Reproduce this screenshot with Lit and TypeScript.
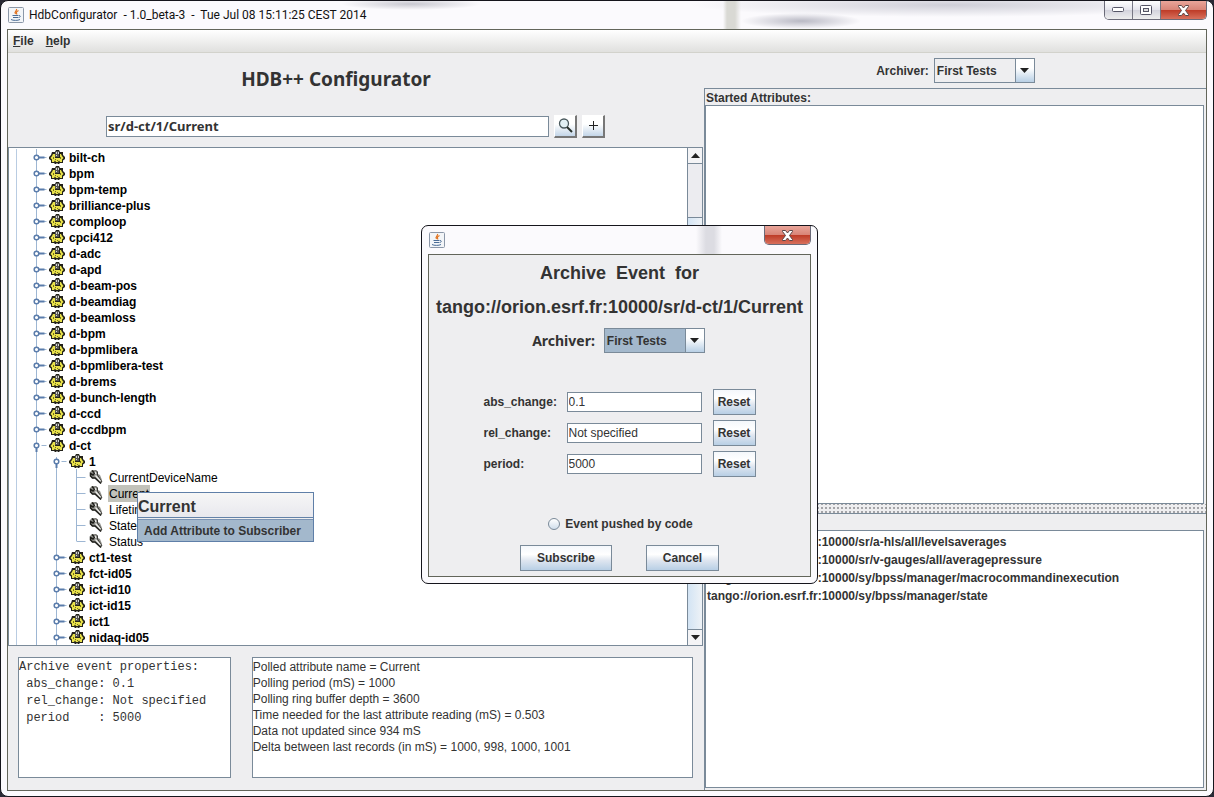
import { LitElement, html, svg, css } from "lit";
import { customElement } from "lit/decorators.js";
import { classMap } from "lit/directives/class-map.js";

type Kind = "closed" | "open" | "leaf";
interface Row { label: string; level: number; kind: Kind; selected?: boolean; first?: boolean; last?: boolean }

const families = [
  "bilt-ch", "bpm", "bpm-temp", "brilliance-plus", "comploop", "cpci412", "d-adc", "d-apd",
  "d-beam-pos", "d-beamdiag", "d-beamloss", "d-bpm", "d-bpmlibera", "d-bpmlibera-test",
  "d-brems", "d-bunch-length", "d-ccd", "d-ccdbpm",
];
const rows: Row[] = [
  ...families.map((label): Row => ({ label, level: 1, kind: "closed" })),
  { label: "d-ct", level: 1, kind: "open" },
  { label: "1", level: 2, kind: "open", first: true },
  { label: "CurrentDeviceName", level: 3, kind: "leaf" },
  { label: "Current", level: 3, kind: "leaf", selected: true },
  { label: "Lifetime", level: 3, kind: "leaf" },
  { label: "State", level: 3, kind: "leaf" },
  { label: "Status", level: 3, kind: "leaf", last: true },
  ...["ct1-test", "fct-id05", "ict-id10", "ict-id15", "ict1", "nidaq-id05"]
    .map((label): Row => ({ label, level: 2, kind: "closed" })),
];

const stopped = [
  "tango://orion.esrf.fr:10000/sr/a-hls/all/levelsaverages",
  "tango://orion.esrf.fr:10000/sr/v-gauges/all/averagepressure",
  "tango://orion.esrf.fr:10000/sy/bpss/manager/macrocommandinexecution",
  "tango://orion.esrf.fr:10000/sy/bpss/manager/state",
];

const archiveProps = `Archive event properties:
 abs_change: 0.1
 rel_change: Not specified
 period    : 5000`;

const polling = `Polled attribute name = Current
Polling period (mS) = 1000
Polling ring buffer depth = 3600
Time needed for the last attribute reading (mS) = 0.503
Data not updated since 934 mS
Delta between last records (in mS) = 1000, 998, 1000, 1001`;

const gear = html`<svg class="ico" width="16" height="16" viewBox="0 0 16 16" aria-hidden="true">
  <path d="M3 3h3l1-2h3l1 2h3v3l2 2v2l-2 1.500V14h-3l-1 1H9l-1-1-1 1H6l-1-1H2v-2.500L0 10V8l2-2z" fill="#23221a"/>
  <path d="M4 5h2v4h5V5h1l1 2 1.500 2L13 10.500V13h-2l-1-1.500L9 13H7l-1-1.500L5 13H3v-2.500L1.500 9 3 7z" fill="#e9e24a"/>
  <path d="M4 8h1v2H4zM8 11h1v1H8zM11 8h1v2h-1zM6 10h1v1H6z" fill="#77701c"/>
  <path d="M6 2h4v6H6z" fill="#55554f"/><path d="M7 3h1v2H7zM7 6h1v1H7zM9 3h1v2H9z" fill="#d6d6d6"/>
</svg>`;

const wrench = html`<svg class="ico" width="14" height="14" viewBox="0 0 14 14" aria-hidden="true">
  <path d="M1 2l2-2h4l2 2v2l2 1 2 5v3h-2L6 8.500H3L1 6z" fill="#8f8f8a"/>
  <path d="M3 .5L5.500 3 4 5 1.500 3.500V6L3.500 8H6l6 5.500" fill="none" stroke="#1e1e1a" stroke-width="1.500"/>
  <path d="M7 .5L8.500 2v3l4.500 7" fill="none" stroke="#3c3c38"/>
  <path d="M6.500 5.500l5 5.500M6 2l1 2" stroke="#efefec" stroke-width="1.200" fill="none"/>
</svg>`;

const java = html`<svg width="16" height="16" viewBox="0 0 16 16" aria-hidden="true">
  <rect x=".5" y=".5" width="15" height="15" rx="1" fill="#f3f5f8" stroke="#8b97a8"/>
  <path d="M8.500 2c1 2-3 2.500-1 5M10.500 3.500C8 5 8 5.500 9 7.500" fill="none" stroke="#e0701c" stroke-width="1.200"/>
  <path d="M4.500 8.500h6M5 10.500h5M3 12.500c2 1.200 7 1.200 9 0" fill="none" stroke="#4a6c96"/>
  <path d="M11 8.500c2 0 1.500 2-.5 2" fill="none" stroke="#4a6c96"/>
</svg>`;

const arrow = (up = false) => html`<svg width="9" height="5" viewBox="0 0 9 5" aria-hidden="true">
  ${up ? svg`<path d="M0 5h9L4.500 0z" fill="#222"/>` : svg`<path d="M0 0h9L4.500 5z" fill="#222"/>`}</svg>`;

const cross = html`<svg width="13" height="11" viewBox="0 0 13 11" aria-hidden="true">
  <path d="M1.500 .5h3l2 2.500 2-2.500h3v1L8.500 5.500l3 4v1h-3l-2-2.500-2 2.500h-3v-1l3-4-3-4z" fill="#fff" stroke="#5a4646"/></svg>`;

@customElement("app-root")
export class AppRoot extends LitElement {
  static styles = css`
    :host { display: block; height: 100vh; min-height: 797px; color: #333;
      font: bold 12px/16px "Liberation Sans", Arial, sans-serif; background: #2a2a36; }
    * { box-sizing: border-box; }
    ul { margin: 0; padding: 0; list-style: none; }
    h1, h2, p { margin: 0; }
    button, input, select, textarea { font: inherit; color: inherit; margin: 0; padding: 0; border-radius: 0; outline: 0; }
    svg { display: block; flex: none; }

    .window { position: relative; height: 100%; display: flex; flex-direction: column;
      border: 1px solid #15151c; border-radius: 8px; padding: 0 6px 5px; overflow: hidden;
      background:
        radial-gradient(ellipse 60px 8px at 800px 20px, #b9b9c4, transparent) no-repeat,
        linear-gradient(90deg, transparent 722px, #d9d9d4 726px, #d9d9d4 734px, transparent 740px) no-repeat 0 0 / 100% 28px,
        radial-gradient(ellipse 260px 12px at 950px 4px, #cfcfd8, transparent) no-repeat,
        radial-gradient(ellipse 70px 6px at 410px 3px, #c8c8d0, transparent) no-repeat,
        #fbfafd; }
    .titlebar { flex: none; height: 28px; display: flex; align-items: center; gap: 5px; padding-left: 1px;
      color: #111; font: 12px/16px Roboto, "Noto Sans", sans-serif; white-space: pre; }
    .caption { align-self: flex-start; margin-left: auto; display: flex; height: 19px;
      border: 1px solid #6a6a78; border-top: 0; border-radius: 0 0 5px 5px; overflow: hidden; }
    .caption button { width: 28px; border: 0; border-right: 1px solid #777784; display: grid; place-items: center;
      background: linear-gradient(#fff, #e4e4ec 50%, #d2d2dc 50%, #eee); }
    .caption .close { width: 45px; border-right: 0; background: linear-gradient(#e9a59a, #d98578 48%, #bd3a26 50%, #d8705c); }
    .client { flex: 1; min-height: 0; display: flex; flex-direction: column; border: 1px solid #62655a; background: #eeeef0; }

    .menubar { flex: none; height: 23px; display: flex; gap: 12px; align-items: center; padding-left: 5px;
      background: linear-gradient(#fff, #e0e0de); border-bottom: 1px solid #d2d2cc; }
    .menubar button { border: 0; background: none; }
    .body { flex: 1; min-height: 0; display: flex; }
    .left { flex: 696; min-width: 0; display: flex; flex-direction: column; }
    .right { flex: 502; min-width: 0; display: flex; flex-direction: column; }

    .title { margin: 13px 0 0; padding-right: 40px; text-align: center; font: bold 19px/26px "Noto Sans", "Open Sans", sans-serif; }
    .search { display: flex; align-items: center; gap: 5px; margin: 22px 99px 0 98px; height: 24px; }
    .search input { flex: 1; min-width: 0; height: 21px; border: 1px solid #7a8a99; background: #fff; padding: 0 1px;
      font: bold 13px/16px "Noto Sans", sans-serif; }
    .tool { width: 23px; height: 23px; display: grid; place-items: center; border: 1px solid #fff;
      border-right: 2px solid #777; border-bottom: 2px solid #777; background: linear-gradient(#fff, #fff 40%, #c3d5e8); }

    .treebox { flex: 1; min-height: 0; margin: 9px 1px 0 0; display: flex; border: 1px solid #7a8a99; background: #fff; }
    .tree { flex: 1; min-width: 0; overflow: hidden; padding-top: 1px; color: #000; }
    .row { height: 16px; display: flex; align-items: center; padding-left: 6px; white-space: nowrap; }
    .node { margin-left: 3px; padding: 0 1px; line-height: 16px; padding-top: 1px; }
    .leaf .node { font-weight: normal; margin-left: 5px; }
    .selected .node { background: #c2c2ba; }
    .scroll { flex: none; width: 15px; display: flex; flex-direction: column; border-left: 1px solid #7a8a99; background: #ececf0; }
    .scroll button { flex: none; height: 16px; border: 1px solid #7a8a99; border-width: 0 0 1px; background: #f4f4f6; display: grid; place-items: center; }
    .scroll .thumb { flex: 1; margin-top: 53px; border-top: 1px solid #7a8a99; background: linear-gradient(90deg, #d3e4f4, #eef2f6); }
    .scroll .down { border-width: 1px 0 0; }

    .infos { flex: none; display: flex; gap: 21px; padding: 11px 11px 11px 10px; height: 144px; }
    textarea { display: block; resize: none; border: 1px solid #7a8a99; background: #fff; overflow: hidden; white-space: pre; }
    .props { flex: 212; min-width: 0; height: 121px; font: 12px/17px "Liberation Mono", "Courier New", monospace; padding-top: 1px; }
    .poll { flex: 442; min-width: 0; height: 121px; font-weight: normal; padding-top: 1px; }

    .choice { display: flex; align-items: center; gap: 5px; }
    .archiver { justify-content: center; height: 35px; padding-left: 1px; }
    .combo { position: relative; display: block; width: 101px; height: 25px; }
    .combo select { appearance: none; width: 100%; height: 100%; border: 1px solid #7a8a99; background: #eeeef0; padding: 0 22px 0 2px; }
    .combo .drop { position: absolute; right: 0; top: 0; width: 20px; height: 25px; display: grid; place-items: center;
      border: 1px solid #7a8a99; background: linear-gradient(#fff, #fff 40%, #b8cfe5); pointer-events: none; }
    .split { flex: 1; min-height: 0; display: flex; flex-direction: column; border: solid #7a8a99; border-width: 1px 0 0 1px; padding-bottom: 2px; }
    .caplabel { flex: none; height: 16px; line-height: 18px; padding-left: 1px; }
    .list { border: 1px solid #7a8a99; background: #fff; margin-right: 2px; padding: 2px 1px; overflow: hidden; }
    .started { flex: 399; }
    .paused { flex: 256; }
    .list li { height: 18px; line-height: 18px; }
    .divider { flex: none; height: 10px; border-bottom: 1px solid #7a8a99;
      background: radial-gradient(circle at 1px 1px, #a4a4a8 0 1px, transparent 1px) 0 3px / 4px 4px #eeeef0; }

    .popup { position: absolute; left: 136px; top: 491px; width: 177px; border: 1px solid #5f7fa8; background: #eeeef0; }
    .popup .head { height: 25px; font-size: 16px; line-height: 27px; border-bottom: 1px solid #6382a8; background: linear-gradient(#f6f6f6, #e8e8ee); }
    .popup button { display: block; width: 100%; height: 22px; margin-top: 1px; border: 0; border-top: 1px solid #7a93b4; text-align: left; padding-left: 6px; background: #a3b8cc; }

    .dialog { position: absolute; left: 420px; top: 224px; width: 397px; height: 359px; display: flex; flex-direction: column;
      border: 1px solid #15151c; border-radius: 7px; padding: 0 6px 6px; overflow: hidden;
      background: linear-gradient(90deg, transparent 274px, #dcdce2 284px, #dcdce2 292px, transparent 300px) no-repeat 0 0 / 100% 28px, #fbfafd; }
    .pane { flex: 1; display: flex; flex-direction: column; align-items: center; border: 1px solid #62655a; background: #eeeef0; }
    .pane h2, .pane .target { font-size: 18px; line-height: 34px; white-space: pre; }
    .pane h2 { margin-top: 1px; }
    .pane .choice { gap: 9px; margin-top: 4px; padding-right: 2px; }
    .pane .big { font: bold 14px/18px "Noto Sans", sans-serif; }
    .pane .combo select { background: #a3b8cc; }
    .fields { display: grid; grid-template-columns: 83px 135px 54px; row-gap: 5px; align-items: center; margin-top: 36px; }
    .fields input { height: 20px; border: 1px solid #7a8a99; background: #fff; padding: 0 1px; font-weight: normal; }
    .fields .btn { margin-left: 11px; }
    .btn { height: 26px; border: 1px solid #7a8a99; background: linear-gradient(#f4f7fb, #fff 35%, #dfe6f0 60%, #b8cfe5); }
    .event { display: flex; align-items: center; gap: 5px; margin-top: 39px; padding-left: 2px; }
    .event input { appearance: none; width: 12px; height: 12px; border: 1px solid #7a8a99; border-radius: 50%; background: linear-gradient(#fff, #d0deec); }
    .actions { display: flex; gap: 34px; margin-top: 13px; }
    .actions .ok { width: 92px; }
    .actions .no { width: 73px; }
  `;

  private guides(r: Row) {
    const lines = [svg`<path d="M1.500 0v16" stroke="#b9cce2"/>`];
    for (let l = 1; l < r.level; l++) lines.push(svg`<path d=${`M${l * 20 + 1.5} 0v16`} stroke="#9db6d3"/>`);
    const x = r.level * 20 + 1.5;
    if (r.kind === "leaf") {
      lines.push(svg`<path d=${`M${x} 0v${r.last ? 8 : 16}M${x} 8.500h9`} stroke="#9db6d3" fill="none"/>`);
    } else {
      lines.push(svg`<path d=${`M${x} ${r.first ? 4 : 0}V16M${x + 5} 8.500h5`} stroke="#9db6d3" fill="none"/>
        <path d=${r.kind === "open" ? `M${x} 10v5` : `M${x + 2} 8.500h6`} stroke="#5a7cab" stroke-width="2" fill="none"/>
        <circle cx=${x} cy="8.500" r="2.300" fill="#fff" stroke="#5a7cab" stroke-width="1.500"/>`);
    }
    const width = r.level * 20 + 14;
    return html`<svg width=${width} height="16" viewBox=${`0 0 ${width} 16`} aria-hidden="true">${lines}</svg>`;
  }

  private combo(id: string) {
    return html`<span class="combo"><select id=${id}><option>First Tests</option></select><span class="drop">${arrow()}</span></span>`;
  }

  private field(name: string, value: string) {
    return html`<label for=${name}>${name}:</label><input id=${name} type="text" .value=${value} />
      <button class="btn" type="button">Reset</button>`;
  }

  render() {
    return html`<div class="window">
      <header class="titlebar">${java}<span>HdbConfigurator  - 1.0_beta-3  -  Tue Jul 08 15:11:25 CEST 2014</span>
        <div class="caption">
          <button type="button" aria-label="Minimize"><svg width="13" height="6"><rect x=".5" y=".5" width="11" height="4" rx="1" fill="#fff" stroke="#555566"/></svg></button>
          <button type="button" aria-label="Maximize"><svg width="13" height="11"><rect x=".5" y=".5" width="11" height="9" rx="1" fill="#fff" stroke="#555566"/><rect x="3.500" y="3.500" width="5" height="3" fill="#ddd" stroke="#555566"/></svg></button>
          <button class="close" type="button" aria-label="Close">${cross}</button>
        </div>
      </header>
      <main class="client">
        <nav class="menubar"><button type="button"><u>F</u>ile</button><button type="button"><u>h</u>elp</button></nav>
        <div class="body">
          <section class="left">
            <h1 class="title">HDB++ Configurator</h1>
            <div class="search">
              <input type="text" aria-label="Attribute" .value=${"sr/d-ct/1/Current"} />
              <button class="tool" type="button" aria-label="Search"><svg width="15" height="15" viewBox="0 0 15 15">
                <circle cx="6" cy="5.500" r="4.500" fill="#e2f0f4" stroke="#4b5a5e" stroke-width="1.300"/><path d="M9 9l5 5" stroke="#26302a" stroke-width="2"/></svg></button>
              <button class="tool" type="button" aria-label="Add"><svg width="9" height="9"><path d="M4.500 0v9M0 4.500h9" stroke="#222"/></svg></button>
            </div>
            <div class="treebox">
              <ul class="tree" role="tree">
                ${rows.map((r) => html`<li role="treeitem" class=${classMap({ row: true, leaf: r.kind === "leaf", selected: !!r.selected })}>
                  ${this.guides(r)}${r.kind === "leaf" ? wrench : gear}<span class="node">${r.label}</span></li>`)}
              </ul>
              <div class="scroll">
                <button type="button" aria-label="Scroll up">${arrow(true)}</button>
                <div class="thumb"></div>
                <button class="down" type="button" aria-label="Scroll down">${arrow()}</button>
              </div>
            </div>
            <div class="infos">
              <textarea class="props" readonly aria-label="Archive event properties" .value=${archiveProps}></textarea>
              <textarea class="poll" readonly aria-label="Polling" .value=${polling}></textarea>
            </div>
          </section>
          <section class="right">
            <div class="choice archiver"><label for="main-archiver">Archiver:</label>${this.combo("main-archiver")}</div>
            <div class="split">
              <div class="caplabel">Started Attributes:</div>
              <ul class="list started"></ul>
              <div class="divider"></div>
              <div class="caplabel"></div>
              <ul class="list paused">${stopped.map((s) => html`<li>${s}</li>`)}</ul>
            </div>
          </section>
        </div>
      </main>
      <div class="popup" role="menu">
        <div class="head">Current</div>
        <button type="button" role="menuitem">Add Attribute to Subscriber</button>
      </div>
      <form class="dialog" role="dialog" aria-label="Archive Event">
        <header class="titlebar">${java}
          <div class="caption"><button class="close" type="button" aria-label="Close">${cross}</button></div>
        </header>
        <div class="pane">
          <h2>Archive  Event  for</h2>
          <p class="target">tango://orion.esrf.fr:10000/sr/d-ct/1/Current</p>
          <div class="choice"><label class="big" for="sub-archiver">Archiver:</label>${this.combo("sub-archiver")}</div>
          <div class="fields">
            ${this.field("abs_change", "0.1")}${this.field("rel_change", "Not specified")}${this.field("period", "5000")}
          </div>
          <label class="event"><input type="radio" name="pushed" />Event pushed by code</label>
          <div class="actions"><button class="btn ok" type="button">Subscribe</button><button class="btn no" type="button">Cancel</button></div>
        </div>
      </form>
    </div>`;
  }
}
